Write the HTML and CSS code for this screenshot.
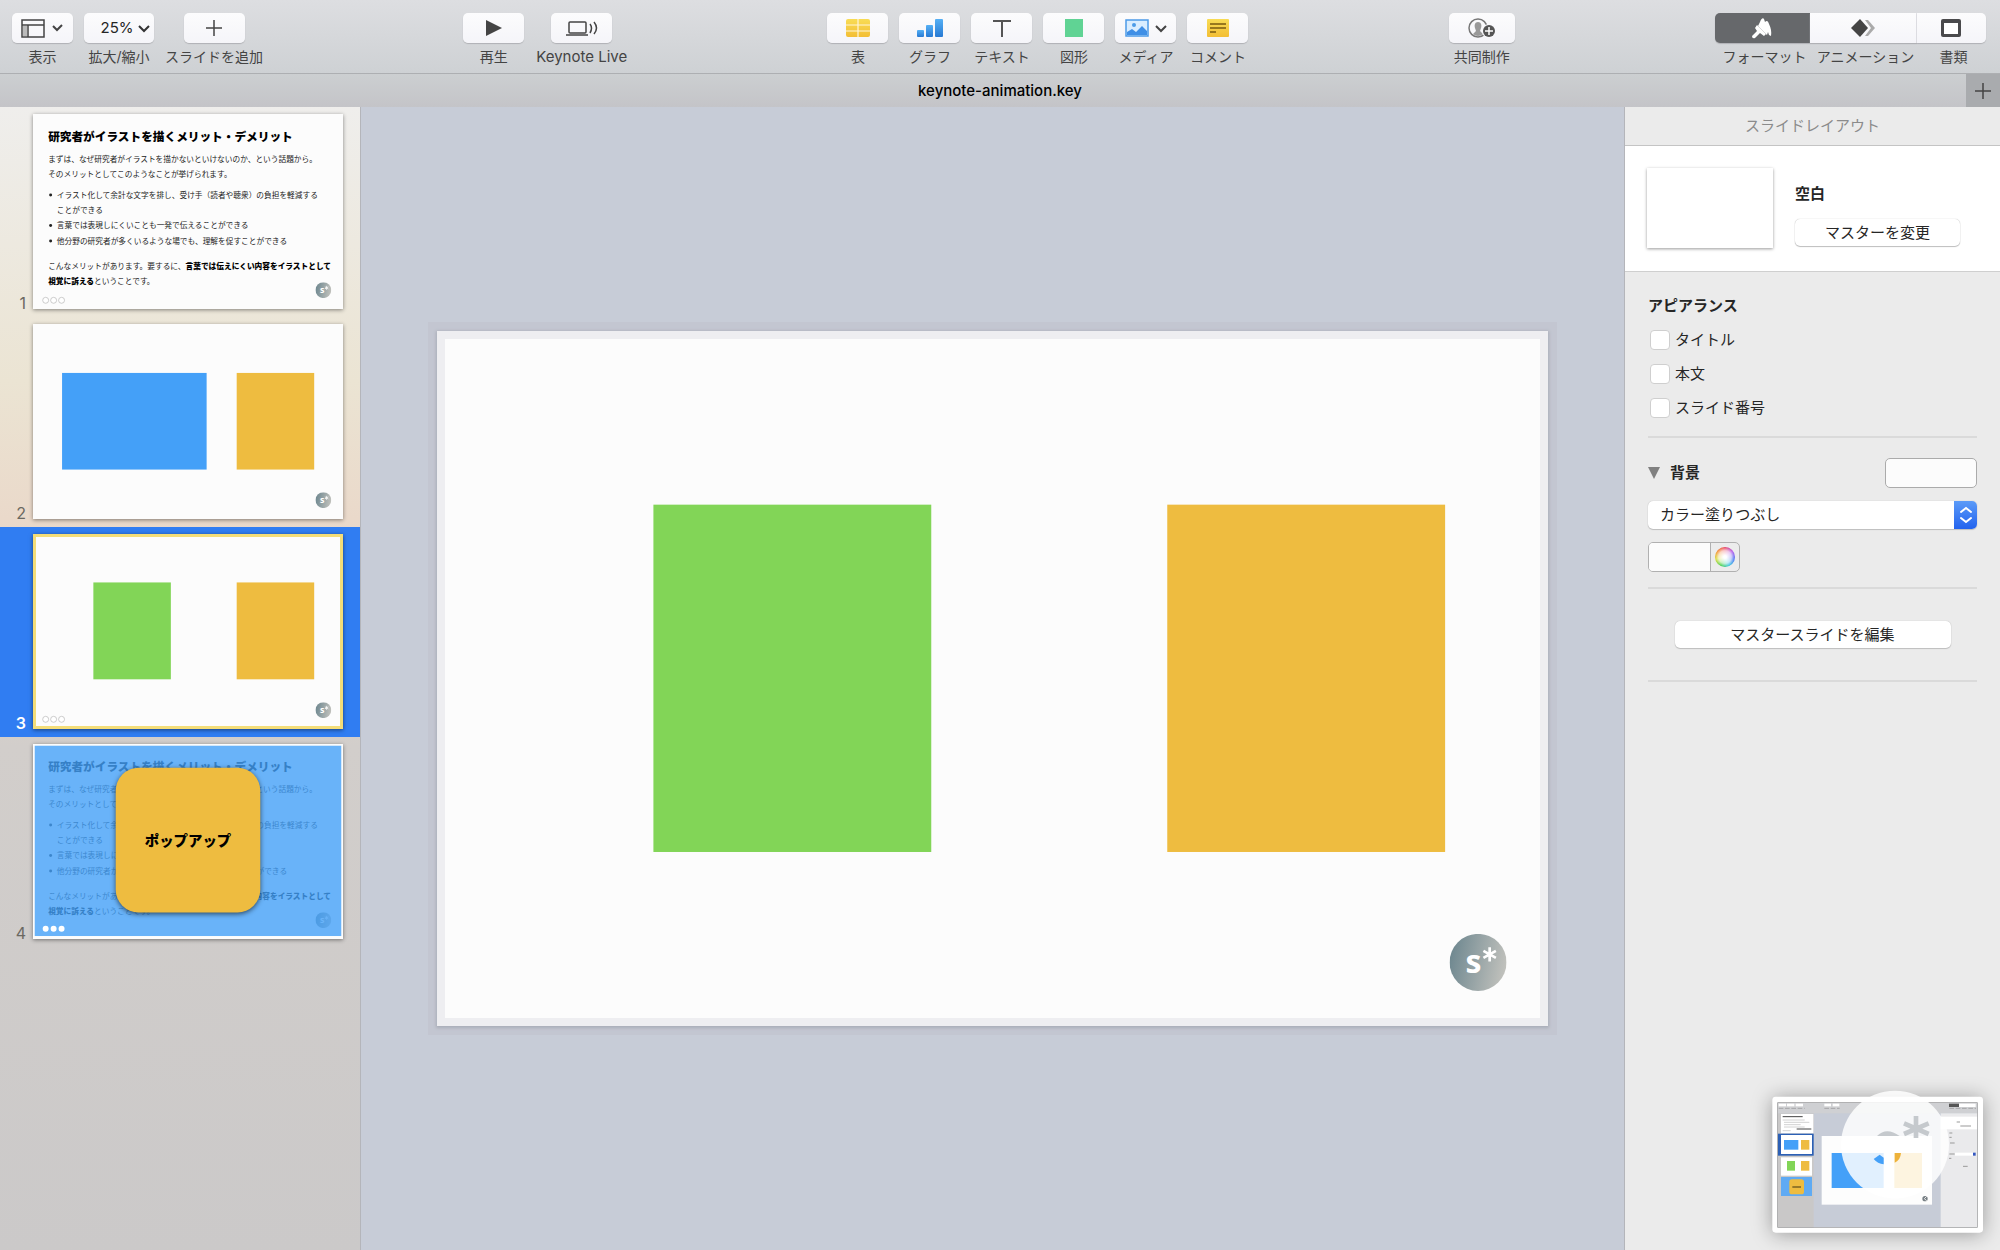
FILE: index.html
```
<!DOCTYPE html>
<html lang="ja">
<head>
<meta charset="UTF-8">
<meta name="viewport" content="width=device-width, initial-scale=1.0">
<title>keynote-animation.key</title>
<link rel="stylesheet" href="styles.css">
</head>
<body>

<!-- shared slide artwork -->
<svg class="defs" width="0" height="0" aria-hidden="true">
  <defs>
    <linearGradient id="logo-fill" x1="0" y1="0.4" x2="1" y2="0.6">
      <stop offset="0" stop-color="#6f8890"/>
      <stop offset="1" stop-color="#c2c2bd"/>
    </linearGradient>
    <linearGradient id="yellow-fill" x1="0" y1="0" x2="0" y2="1">
      <stop offset="0" stop-color="#f8dc55"/>
      <stop offset="1" stop-color="#f3be35"/>
    </linearGradient>
    <linearGradient id="blue-fill" x1="0" y1="0" x2="0" y2="1">
      <stop offset="0" stop-color="#55b0f5"/>
      <stop offset="1" stop-color="#2779d3"/>
    </linearGradient>
    <symbol id="logo" viewBox="0 0 64 64">
      <circle cx="32" cy="32" r="32" fill="url(#logo-fill)"/>
      <text class="logo-s" x="18" y="44">s</text>
      <path d="M45 15v16M38 19l14 8M52 19l-14 8" stroke="#fff" stroke-width="3"/>
    </symbol>
    <symbol id="slide-text" viewBox="0 0 1248 780">
      <text class="slide-title" x="61" y="109">研究者がイラストを描くメリット・デメリット</text>
      <g class="slide-body">
        <text x="61" y="194">まずは、なぜ研究者がイラストを描かないといけないのか、という話題から。</text>
        <text x="61" y="255">そのメリットとしてこのようなことが挙げられます。</text>
        <circle cx="71" cy="326" r="6"/>
        <text x="96" y="337">イラスト化して余計な文字を排し、受け手（読者や聴衆）の負担を軽減する</text>
        <text x="96" y="399">ことができる</text>
        <circle cx="71" cy="449" r="6"/>
        <text x="96" y="460">言葉では表現しにくいことも一発で伝えることができる</text>
        <circle cx="71" cy="511" r="6"/>
        <text x="96" y="522">他分野の研究者が多くいるような場でも、理解を促すことができる</text>
        <text x="61" y="622">こんなメリットがあります。要するに、<tspan class="strong">言葉では伝えにくい内容をイラストとして</tspan></text>
        <text x="61" y="685"><tspan class="strong">視覚に訴える</tspan>ということです。</text>
      </g>
      <use href="#logo" x="1137" y="677" width="64" height="64"/>
    </symbol>
    <symbol id="slide-green" viewBox="0 0 1248 780">
      <rect x="243" y="195" width="312" height="390" fill="#82d557"/>
      <rect x="820" y="195" width="312" height="390" fill="#eebc40"/>
      <use href="#logo" x="1137" y="677" width="64" height="64"/>
    </symbol>
  </defs>
</svg>

<div class="app">
  <header class="toolbar">
    <div class="tools document-tools">
      <div class="tool">
        <button class="btn" id="view">
          <svg width="44" height="24" viewBox="0 0 44 24" fill="none" stroke="#444" stroke-width="1.5"><path d="M1 4h22v17H1zM1 9h22M7 9v12"/><path d="M2 10h4v10H2z" fill="#bbb" stroke="none"/><path d="M32 10l4 4 5-5" stroke-width="2"/></svg>
        </button>
        <label for="view">表示</label>
      </div>
      <div class="tool zoom">
        <button class="btn" id="zoom">25%<svg width="12" height="10" viewBox="0 0 12 10" fill="none" stroke="#333" stroke-width="2"><path d="M1 3l5 5 5-5"/></svg></button>
        <label for="zoom">拡大/縮小</label>
      </div>
      <div class="tool">
        <button class="btn" id="add">
          <svg width="18" height="18" viewBox="0 0 18 18" stroke="#444" stroke-width="1.5"><path d="M9 1v16M1 9h16"/></svg>
        </button>
        <label for="add">スライドを追加</label>
      </div>
    </div>

    <div class="tools">
      <div class="tool">
        <button class="btn" id="play">
          <svg width="16" height="18" viewBox="0 0 16 18"><path d="M0 1l16 8-16 8z" fill="#444"/></svg>
        </button>
        <label for="play">再生</label>
      </div>
      <div class="tool live">
        <button class="btn" id="live">
          <svg width="32" height="18" viewBox="0 0 32 18" fill="none" stroke="#444" stroke-width="1.5"><rect x="3" y="3" width="17" height="11" rx="1"/><path d="M0 16h22M24 5q3 4 0 9M28 3q5 6 0 12"/></svg>
        </button>
        <label for="live">Keynote Live</label>
      </div>
    </div>

    <div class="tools insert">
      <div class="tool">
        <button class="btn" id="table">
          <svg width="24" height="20" viewBox="0 0 24 20"><rect x="0" y="1" width="24" height="18" rx="2" fill="url(#yellow-fill)"/><path d="M12 1v18M0 7h24M0 13h24" stroke="#fff6d8" stroke-width="1.2"/></svg>
        </button>
        <label for="table">表</label>
      </div>
      <div class="tool">
        <button class="btn" id="chart">
          <svg width="26" height="20" viewBox="0 0 26 20" fill="url(#blue-fill)"><rect x="0" y="12" width="7" height="7" rx="1"/><rect x="9" y="7" width="7" height="12" rx="1"/><rect x="18" y="1" width="8" height="18" rx="1"/></svg>
        </button>
        <label for="chart">グラフ</label>
      </div>
      <div class="tool">
        <button class="btn" id="text">
          <svg width="18" height="18" viewBox="0 0 18 18" fill="none" stroke="#555" stroke-width="2"><path d="M0 2h18M9 2v16"/></svg>
        </button>
        <label for="text">テキスト</label>
      </div>
      <div class="tool">
        <button class="btn" id="shape">
          <svg width="18" height="18" viewBox="0 0 18 18"><rect width="18" height="18" fill="#60d394"/></svg>
        </button>
        <label for="shape">図形</label>
      </div>
      <div class="tool">
        <button class="btn" id="media">
          <svg width="42" height="18" viewBox="0 0 42 18"><rect x="1" y="1" width="22" height="16" fill="#d9edff" stroke="#4c9be8" stroke-width="1.5"/><circle cx="9" cy="6" r="2" fill="#4c9be8"/><path d="M2 16v-3l5-3 4 3 6-6 5 5v4z" fill="#3f8fe6"/><path d="M31 7l5 5 5-5" fill="none" stroke="#444" stroke-width="2"/></svg>
        </button>
        <label for="media">メディア</label>
      </div>
      <div class="tool">
        <button class="btn" id="comment">
          <svg width="22" height="20" viewBox="0 0 22 20"><rect x="0" y="1" width="22" height="18" rx="1" fill="url(#yellow-fill)"/><path d="M3 6h16M3 10h16M3 14h6" stroke="#7a5b10" stroke-width="1.5"/></svg>
        </button>
        <label for="comment">コメント</label>
      </div>
    </div>

    <div class="tools">
      <div class="tool collab">
        <button class="btn" id="collab">
          <svg width="28" height="20" viewBox="0 0 28 20"><circle cx="10" cy="10" r="9" fill="none" stroke="#777" stroke-width="1.5"/><path d="M10 4c-3 0-4 3-3 6l1 3-3 3q5 4 10 0l-3-3 1-3c1-3 0-6-3-6z" fill="#999"/><circle cx="21" cy="13" r="7" fill="#f8f8fb"/><circle cx="21" cy="13" r="6" fill="#555"/><path d="M21 9v8M17 13h8" stroke="#fff" stroke-width="1.5"/></svg>
        </button>
        <label for="collab">共同制作</label>
      </div>
    </div>

    <div class="segments">
      <button class="segment active" id="format">
        <svg width="22" height="22" viewBox="0 0 22 22" fill="#fff"><path d="M9 5c1-3 3-5 4-3l1 3c2-2 3-1 4 2q3 6 2 12l-2-1-1-3-1 3-9-9z"/><path d="M6 8l9 9-2 2-4-3-5 5q-3 1-3-2l5-5-2-3z"/></svg>
      </button>
      <button class="segment" id="animate">
        <svg width="24" height="20" viewBox="0 0 24 20"><path d="M14 2h3l7 8-7 8h-3l6-8z" fill="#aaa"/><path d="M9 1l8 9-8 9-9-9z" fill="#444"/></svg>
      </button>
      <button class="segment" id="document">
        <svg width="22" height="20" viewBox="0 0 22 20"><path d="M1 3q0-2 2-2h16q2 0 2 2v14q0 2-2 2H3q-2 0-2-2z" fill="#4a4a4c"/><rect x="4" y="5" width="14" height="11" fill="#fff"/></svg>
      </button>
      <label for="format">フォーマット</label>
      <label for="animate">アニメーション</label>
      <label for="document">書類</label>
    </div>
  </header>

  <div class="tabbar">
    <h1>keynote-animation.key</h1>
    <button class="new-tab" aria-label="新規タブ">
      <svg width="16" height="16" viewBox="0 0 16 16" stroke="#444" stroke-width="1.5"><path d="M8 0v16M0 8h16"/></svg>
    </button>
  </div>

  <main class="workspace">
    <nav class="navigator">
      <div class="row">
        <span class="num">1</span>
        <div class="thumb">
          <svg viewBox="0 0 1248 780">
            <use href="#slide-text"/>
            <g fill="#fff" stroke="#bbb" stroke-width="3"><circle cx="51" cy="750" r="12"/><circle cx="83" cy="750" r="12"/><circle cx="115" cy="750" r="12"/></g>
          </svg>
        </div>
      </div>
      <div class="row">
        <span class="num">2</span>
        <div class="thumb">
          <svg viewBox="0 0 1248 780">
            <rect x="117" y="197" width="582" height="389" fill="#44a0f8"/>
            <rect x="820" y="197" width="312" height="389" fill="#eebc40"/>
            <use href="#logo" x="1137" y="677" width="64" height="64"/>
          </svg>
        </div>
      </div>
      <div class="row selected">
        <span class="num">3</span>
        <div class="thumb">
          <svg viewBox="0 0 1248 780">
            <use href="#slide-green"/>
            <g fill="#fff" stroke="#bbb" stroke-width="3"><circle cx="51" cy="746" r="12"/><circle cx="83" cy="746" r="12"/><circle cx="115" cy="746" r="12"/></g>
          </svg>
        </div>
      </div>
      <div class="row">
        <span class="num">4</span>
        <div class="thumb">
          <svg viewBox="0 0 1248 780">
            <use href="#slide-text"/>
            <rect x="7" y="7" width="1234" height="766" fill="#44a0f8" opacity="0.8"/>
            <rect class="popup" x="333" y="96" width="582" height="582" rx="92"/>
            <text class="popup-text" x="624" y="411">ポップアップ</text>
            <g fill="#fff"><circle cx="51" cy="744" r="12"/><circle cx="83" cy="744" r="12"/><circle cx="115" cy="744" r="12"/></g>
          </svg>
        </div>
      </div>
    </nav>

    <section class="canvas">
      <div class="slide">
        <svg viewBox="0 0 1248 780"><use href="#slide-green"/></svg>
      </div>
    </section>

    <aside class="inspector">
      <h2 class="inspector-title">スライドレイアウト</h2>
      <div class="master">
        <div class="master-thumb"></div>
        <div class="master-info">
          <h3>空白</h3>
          <button class="push">マスターを変更</button>
        </div>
      </div>

      <div class="group appearance">
        <h3>アピアランス</h3>
        <label><input type="checkbox">タイトル</label>
        <label><input type="checkbox">本文</label>
        <label><input type="checkbox">スライド番号</label>
      </div>

      <div class="group background">
        <div class="background-head">
          <h3><svg width="12" height="12" viewBox="0 0 12 12"><path d="M0 0h12L6 12z" fill="#808080"/></svg>背景</h3>
          <button class="well" aria-label="背景カラー"></button>
        </div>
        <div class="fill-type">
          <select aria-label="塗りつぶしの種類"><option>カラー塗りつぶし</option></select>
          <svg width="23" height="28" viewBox="0 0 23 28" fill="none" stroke="#fff" stroke-width="2" stroke-linecap="round"><path d="M7 11l5-4 5 4M7 17l5 4 5-4"/></svg>
        </div>
        <button class="color-picker" aria-label="カラー"><span class="swatch"></span><span class="wheel"></span></button>
      </div>

      <div class="group edit">
        <button class="push">マスタースライドを編集</button>
      </div>
    </aside>
  </main>

  <!-- floating capture preview, bottom right -->
  <svg class="preview" viewBox="0 0 900 570">
    <rect class="preview-frame" x="217" y="110" width="632" height="408" rx="10" fill="#fff"/>
    <rect x="233" y="128" width="599" height="374" fill="#c7ccd7"/>
    <rect x="233" y="128" width="599" height="32" fill="#cfd0d3"/>
    <rect x="233" y="160" width="108" height="342" fill="#c9c8c8"/>
    <rect x="722" y="160" width="110" height="342" fill="#eaeaec"/>
    <rect x="722" y="170" width="110" height="38" fill="#fff"/>
    <g fill="#fff">
      <rect x="236" y="131" width="22" height="8"/><rect x="261" y="131" width="22" height="8"/><rect x="287" y="131" width="22" height="8"/>
      <rect x="373" y="131" width="20" height="8"/><rect x="398" y="131" width="20" height="8"/><rect x="777" y="131" width="50" height="10"/>
      <rect x="243" y="162" width="97" height="58"/><rect x="243" y="292" width="93" height="55"/>
    </g>
    <path d="M236 145h78M373 145h46" stroke="#a5a5a8" stroke-width="3" stroke-dasharray="14 5"/>
    <path d="M748 145h80" stroke="#a5a5a8" stroke-width="3" stroke-dasharray="14 5"/>
    <rect x="747" y="131" width="30" height="10" fill="#555"/>
    <path d="M248 170h60M290 207h44" stroke="#444" stroke-width="3"/>
    <path d="M248 180h66M252 187h76M252 194h50M252 201h62M248 212h24" stroke="#bbb" stroke-width="2"/>
    <rect x="234" y="221" width="107" height="66" fill="#2c60b5"/>
    <rect x="243" y="225" width="93" height="57" fill="#fff"/>
    <rect x="252" y="240" width="43" height="29" fill="#44a0f8"/>
    <rect x="303" y="240" width="25" height="29" fill="#eebc40"/>
    <rect x="261" y="303" width="24" height="29" fill="#82d557"/>
    <rect x="303" y="303" width="25" height="29" fill="#eebc40"/>
    <rect x="243" y="351" width="93" height="57" fill="#5faaf3"/>
    <rect x="268" y="358" width="44" height="45" rx="8" fill="#eebc40"/>
    <path d="M277 381h26" stroke="#6c571f" stroke-width="4"/>
    <rect x="365" y="228" width="331" height="206" fill="#fdfdfd"/>
    <rect x="395" y="279" width="156" height="105" fill="#44a0f8"/>
    <rect x="583" y="279" width="83" height="105" fill="#eebc40"/>
    <circle cx="675" cy="416" r="8" fill="#777f84"/>
    <path d="M680 409l-7 7 7 6" fill="none" stroke="#eee" stroke-width="3"/>
    <path d="M770 186h10M781 198h32M748 219h9M748 232h7M750 249h14M748 282h16M747 295h7M789 319h14" stroke="#999" stroke-width="3"/>
    <rect x="765" y="278" width="56" height="9" fill="#fff"/>
    <rect x="819" y="278" width="8" height="9" fill="#3457c0"/>
    <rect x="233" y="128" width="599" height="374" fill="none" stroke="#999" stroke-width="2"/>
    <circle cx="585" cy="254" r="162" fill="#fff" opacity="0.84"/>
    <path d="M531 228q28-28 68 0z" fill="#c5c9cd"/>
    <path d="M648 168v66M612 190l74 32M686 190l-74 32" stroke="#c5c9cd" stroke-width="14"/>
    <path d="M521 297l18-13 12 9v20q-18-2-30-16z" fill="#44a0f8"/>
    <path d="M584 279h19q-2 22-19 29z" fill="#eeb23a"/>
  </svg>
</div>

</body>
</html>
```
FILE: styles.css
```
* {
  box-sizing: border-box;
}
body {
  margin: 0;
  font-family: Inter, "Noto Sans CJK JP", sans-serif;
  font-size: 15px;
  line-height: 20px;
  color: #262626;
}
h1, h2, h3 {
  margin: 0;
  font-size: 15px;
}
button {
  font: inherit;
  color: inherit;
  padding: 0;
  border: none;
}
svg {
  display: block;
}
.defs {
  position: absolute;
}
.app {
  display: flex;
  flex-direction: column;
  min-height: 100vh;
}

/* toolbar */
.toolbar {
  display: flex;
  justify-content: space-between;
  padding: 13px 14px 6px 12px;
  background: linear-gradient(#dddee1, #ced1d4);
  border-bottom: 1px solid #adafb2;
  font-size: 14px;
  color: #444;
}
.tools {
  display: flex;
  gap: 12px;
}
.document-tools,
.insert {
  gap: 11px;
}
.tool {
  display: flex;
  flex-direction: column;
  align-items: center;
  gap: 4px;
  white-space: nowrap;
}
.live {
  font-size: 15px;
}
.btn {
  display: flex;
  align-items: center;
  justify-content: center;
  gap: 4px;
  width: 61px;
  height: 30px;
  border-radius: 5px;
  background: linear-gradient(#fcfcfd, #f5f5f9);
  box-shadow: 0 1px 1px #b0b1b5;
}
.zoom .btn {
  width: 70px;
  padding-left: 12px;
  font-size: 15px;
  color: #262626;
}
.collab .btn {
  width: 66px;
}
.segments {
  display: grid;
  grid-template-columns: 95px 107px 69px;
  row-gap: 4px;
  text-align: center;
  white-space: nowrap;
}
.segments label {
  padding-left: 4px;
}
.segment {
  display: flex;
  align-items: center;
  justify-content: center;
  height: 30px;
  background: linear-gradient(#fcfcfd, #f5f5f9);
  border-right: 1px solid #e2e2e6;
  box-shadow: 0 1px 1px #b0b1b5;
}
.segment.active {
  background: #66686b;
  border-right: none;
  border-radius: 5px 0 0 5px;
}
#document {
  border-right: none;
  border-radius: 0 5px 5px 0;
}

/* tab bar */
.tabbar {
  display: grid;
  grid-template-columns: 34px 1fr 34px;
  align-items: center;
  height: 33px;
  background: linear-gradient(#cccfd1, #c4c4c8);
}
.tabbar h1 {
  grid-column: 2;
  font-weight: 500;
  text-align: center;
  color: #000;
}
.new-tab {
  display: flex;
  align-items: center;
  justify-content: center;
  height: 100%;
  background: #a9abae;
}

.workspace {
  display: flex;
  flex: 1;
}

/* slide navigator */
.navigator {
  width: 361px;
  flex-shrink: 0;
  border-right: 1px solid #b4b5ba;
  background: linear-gradient(#efeeec, #ebe4d3 24%, #ead9ca 36%, #d2cecb 56%, #cbc9c9);
}
.row {
  display: grid;
  grid-template-columns: 26px 310px;
  column-gap: 7px;
  height: 210px;
  padding-top: 7px;
}
.num {
  height: 199px;
  display: flex;
  align-items: flex-end;
  justify-content: flex-end;
  font-size: 16px;
  color: #6b6861;
}
.selected {
  background: #307df2;
}
.selected .num {
  color: #fff;
  font-weight: 600;
}
.thumb {
  height: 195px;
  background: #fcfcfc;
  box-shadow: 0 1px 4px rgba(0, 0, 0, 0.45);
}
.selected .thumb {
  box-shadow: inset 0 0 0 3px #f4dd78, 0 1px 4px rgba(0, 0, 0, 0.5);
}
.slide-title {
  font-size: 47px;
  font-weight: 900;
  fill: #000;
}
.slide-body {
  font-size: 31px;
  fill: #222;
}
.strong {
  font-weight: 900;
  fill: #000;
}
.logo-s {
  font-family: "Open Sans", sans-serif;
  font-size: 36px;
  font-weight: 700;
  fill: #fff;
}
.popup {
  fill: #eebc40;
  filter: drop-shadow(0 6px 10px rgba(0, 0, 0, 0.6));
}
.popup-text {
  font-size: 58px;
  font-weight: 900;
  text-anchor: middle;
}

/* canvas */
.canvas {
  flex: 1;
  display: flex;
  align-items: center;
  justify-content: center;
  background: #c7ccd7;
}
.slide {
  width: 88%;
  background: #fcfcfc;
  box-shadow: inset 0 0 0 8px #eeeef1, 0 1px 3px 1px #a9adb8, 0 0 0 9px #c3c6d1;
}

/* inspector */
.inspector {
  width: 376px;
  flex-shrink: 0;
  border-left: 1px solid #b4b5ba;
  background: #ebebeb;
}
.inspector-title {
  height: 39px;
  padding: 9px 0;
  text-align: center;
  font-weight: 400;
  color: #8b8b8b;
  border-bottom: 1px solid #c4c4c4;
}
.master {
  display: flex;
  align-items: flex-start;
  gap: 22px;
  padding: 22px;
  height: 126px;
  background: #fff;
  border-bottom: 1px solid #cfcfcf;
}
.master-thumb {
  width: 126px;
  height: 80px;
  box-shadow: 0 1px 3px rgba(0, 0, 0, 0.4);
}
.master-info {
  padding-top: 16px;
}
.push {
  width: 165px;
  height: 27px;
  border-radius: 5px;
  background: #fff;
  box-shadow: 0 0 1px #aaa, 0 1px 1px #c0c0c0;
}
.master-info .push {
  display: block;
  margin-top: 15px;
}
.group {
  margin: 0 23px;
  border-bottom: 2px solid #dadada;
}
.appearance {
  display: flex;
  flex-direction: column;
  gap: 14px;
  padding: 24px 0 18px;
}
.appearance label {
  display: flex;
  align-items: center;
  gap: 5px;
  padding-left: 2px;
}
.appearance input {
  appearance: none;
  width: 20px;
  height: 20px;
  margin: 0;
  border: 1px solid #cfcfcf;
  border-radius: 4px;
  background: #fff;
}
.background {
  padding: 20px 0 15px;
}
.background-head {
  display: flex;
  align-items: center;
  justify-content: space-between;
}
.background-head h3 {
  display: flex;
  align-items: center;
  gap: 10px;
}
.well {
  width: 92px;
  height: 30px;
  border: 1px solid #ababab;
  border-radius: 5px;
  background: #fcfcfc;
}
.fill-type {
  position: relative;
  margin: 13px 0;
}
.fill-type select {
  display: block;
  appearance: none;
  width: 100%;
  height: 28px;
  padding: 0 32px 0 12px;
  border: none;
  border-radius: 5px;
  background: #fff;
  box-shadow: 0 0 1px #aaa, 0 1px 1px #c0c0c0;
  font: inherit;
  color: inherit;
}
.fill-type svg {
  position: absolute;
  top: 0;
  right: 0;
  border-radius: 0 5px 5px 0;
  background: linear-gradient(#5b9bf8, #2363ee);
  pointer-events: none;
}
.color-picker {
  display: flex;
  width: 92px;
  height: 30px;
  border: 1px solid #b0b0b0;
  border-radius: 5px;
  background: #ececec;
  overflow: hidden;
}
.swatch {
  width: 63px;
  height: 100%;
  background: #fcfcfc;
  border-right: 1px solid #b0b0b0;
}
.wheel {
  width: 20px;
  height: 20px;
  margin: 4px;
  border-radius: 50%;
  background:
    radial-gradient(#fff 10%, rgba(255, 255, 255, 0.7) 45%, rgba(255, 255, 255, 0) 70%),
    conic-gradient(#e8405f, #b04fe8, #4a6ff5, #30c4dc, #40d048, #d8d830, #f58a28, #e8405f);
}
.edit {
  display: flex;
  justify-content: center;
  padding: 32px 0;
}
.edit .push {
  width: 276px;
}

.preview {
  position: absolute;
  right: 0;
  bottom: 0;
  width: 300px;
  height: 190px;
}
.preview-frame {
  filter: drop-shadow(0 4px 30px rgba(0, 0, 0, 0.35));
}
```
